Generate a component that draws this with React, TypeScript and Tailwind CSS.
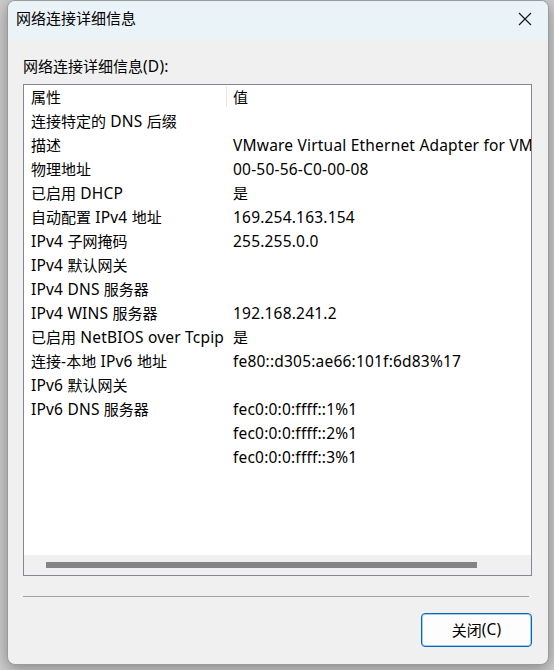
// Network connection details dialog (Windows 11 style)

const FONT = { fontFamily: '"Noto Sans", "Noto Sans CJK SC", sans-serif' };

type Row = { name: string; value: string };

const ROWS: Row[] = [
  { name: "连接特定的 DNS 后缀", value: "" },
  { name: "描述", value: "VMware Virtual Ethernet Adapter for VMnet8" },
  { name: "物理地址", value: "00-50-56-C0-00-08" },
  { name: "已启用 DHCP", value: "是" },
  { name: "自动配置 IPv4 地址", value: "169.254.163.154" },
  { name: "IPv4 子网掩码", value: "255.255.0.0" },
  { name: "IPv4 默认网关", value: "" },
  { name: "IPv4 DNS 服务器", value: "" },
  { name: "IPv4 WINS 服务器", value: "192.168.241.2" },
  { name: "已启用 NetBIOS over Tcpip", value: "是" },
  { name: "连接-本地 IPv6 地址", value: "fe80::d305:ae66:101f:6d83%17" },
  { name: "IPv6 默认网关", value: "" },
  { name: "IPv6 DNS 服务器", value: "fec0:0:0:ffff::1%1" },
  { name: "", value: "fec0:0:0:ffff::2%1" },
  { name: "", value: "fec0:0:0:ffff::3%1" },
];

// Segoe UI is a bit wider than Noto Sans, so latin runs get a small stretch
function Txt({ s }: { s: string }) {
  const parts = s.split(/([\u4e00-\u9fff]+)/);
  return (
    <>
      {parts.map((p, i) =>
        /[\u4e00-\u9fff]/.test(p) ? (
          <span key={i}>{p}</span>
        ) : p ? (
          <span key={i} className="text-[15.5px] tracking-[0.2px]">
            {p}
          </span>
        ) : null
      )}
    </>
  );
}

export default function App() {
  return (
    <div
      className="flex h-[670px] w-[554px] overflow-hidden bg-[#cdcdcd] pb-[5px] pl-[7px] pr-[5px] text-black antialiased"
      style={FONT}
    >
      <div className="flex w-[542px] flex-col overflow-hidden rounded-[8px] border border-[#9a9a9a] bg-[#f0f0f0] shadow-[0_4px_16px_rgba(0,0,0,0.35)]">
        {/* Title bar */}
        <div className="flex h-[38px] shrink-0 items-center justify-between bg-[#eaf3f8] pb-[4px] pl-[8px] pr-[16px]">
          <span className="text-[15px] leading-none">网络连接详细信息</span>
          <svg width="14" height="14" viewBox="0 0 14 14" className="mt-[1px]">
            <path d="M1 1 L13 13 M13 1 L1 13" stroke="#1a1a1a" strokeWidth="1.2" fill="none" />
          </svg>
        </div>

        {/* Body */}
        <div className="flex flex-1 flex-col pl-[15px]">
          <div className="mt-[17px] h-[20px] text-[15px] leading-[20px]">
            <Txt s="网络连接详细信息(D):" />
          </div>

          <div className="mt-[8px] flex h-[492px] w-[509px] flex-col border border-[#828790] bg-white">
            <div className="flex-1 overflow-hidden">
              <div className="flex h-[24px] text-[15px] leading-[24px]">
                <div className="w-[202px] shrink-0 pl-[7px]">属性</div>
                <div className="mt-[1px] h-[21px] w-px bg-[#e5e5e5]" />
                <div className="whitespace-nowrap pl-[6px]">值</div>
              </div>
              {ROWS.map((row, i) => (
                <div key={i} className="flex h-[24px] text-[15px] leading-[24px]">
                  <div className="w-[203px] shrink-0 whitespace-nowrap pl-[7px]">
                    <Txt s={row.name} />
                  </div>
                  <div className="whitespace-nowrap pl-[6px]">
                    <Txt s={row.value} />
                  </div>
                </div>
              ))}
            </div>
            {/* Horizontal scrollbar */}
            <div className="flex h-[20px] shrink-0 items-center bg-[#f0f0f0] pl-[22px]">
              <div className="h-[6px] w-[431px] bg-[#858585]" />
            </div>
          </div>

          <div className="mt-[20px] h-px w-[506px] bg-[#a0a0a0]" />

          <div className="flex w-[509px] justify-end">
            <button className="mt-[16px] flex h-[34px] w-[111px] items-center justify-center rounded-[4px] border border-[#0067c0] bg-[#fdfdfd] text-[15px] shadow-[inset_0_0_0_1px_rgba(0,103,192,0.35)]">
              <Txt s="关闭(C)" />
            </button>
          </div>
        </div>
      </div>
    </div>
  );
}
